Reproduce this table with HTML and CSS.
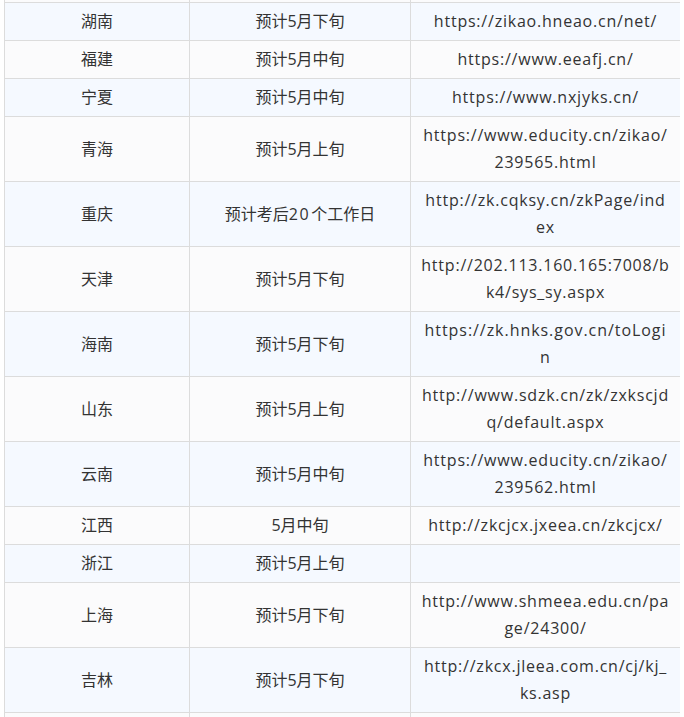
FILE: index.html
```html
<!DOCTYPE html>
<html lang="zh-CN">
<head>
<meta charset="utf-8">
<title>自考成绩查询</title>
<link rel="stylesheet" href="styles.css">
</head>
<body>
<div class="wrap">
<table class="score-table">
<colgroup><col class="c1"><col class="c2"><col class="c3"></colgroup>
<tbody>
<tr class="stub"><td></td><td></td><td></td></tr>
<tr><td>湖南</td><td>预计5月下旬</td><td class="url">https://zikao.hneao.cn/net/</td></tr>
<tr><td>福建</td><td>预计5月中旬</td><td class="url">https://www.eeafj.cn/</td></tr>
<tr><td>宁夏</td><td>预计5月中旬</td><td class="url">https://www.nxjyks.cn/</td></tr>
<tr><td>青海</td><td>预计5月上旬</td><td class="url">https://www.educity.cn/zikao/239565.html</td></tr>
<tr><td>重庆</td><td>预计考后<span class="num">20</span>个工作日</td><td class="url">http://zk.cqksy.cn/zkPage/index</td></tr>
<tr><td>天津</td><td>预计5月下旬</td><td class="url">http://202.113.160.165:7008/bk4/sys_sy.aspx</td></tr>
<tr><td>海南</td><td>预计5月下旬</td><td class="url url-wide">https://zk.hnks.gov.cn/toLogin</td></tr>
<tr><td>山东</td><td>预计5月上旬</td><td class="url">http://www.sdzk.cn/zk/zxkscjdq/default.aspx</td></tr>
<tr><td>云南</td><td>预计5月中旬</td><td class="url">https://www.educity.cn/zikao/239562.html</td></tr>
<tr><td>江西</td><td>5月中旬</td><td class="url">http://zkcjcx.jxeea.cn/zkcjcx/</td></tr>
<tr><td>浙江</td><td>预计5月上旬</td><td class="url"></td></tr>
<tr><td>上海</td><td>预计5月下旬</td><td class="url">http://www.shmeea.edu.cn/page/24300/</td></tr>
<tr><td>吉林</td><td>预计5月下旬</td><td class="url">http://zkcx.jleea.com.cn/cj/kj_ks.asp</td></tr>
<tr><td>&nbsp;</td><td></td><td class="url"></td></tr>
</tbody>
</table>
</div>
</body>
</html>
```
FILE: styles.css
```css
html, body {
  margin: 0;
  padding: 0;
  background: #ffffff;
}
.wrap {
  padding-left: 4px;
  width: 676px;
  overflow: hidden;
  height: 717px;
}
.score-table {
  border-collapse: collapse;
  width: 676px;
  table-layout: fixed;
  font-family: "Open Sans", "Noto Sans CJK SC", sans-serif;
  font-size: 16px;
  color: #333333;
}
.c1 { width: 185px; }
.c2 { width: 221px; }
.c3 { width: 270px; }
.score-table td {
  border: 1px solid #dcdcdc;
  text-align: center;
  vertical-align: middle;
  padding: 5px 10px;
  line-height: 27px;
  height: 27px;
  word-break: break-all;
  overflow-wrap: anywhere;
}
.score-table td.url {
  letter-spacing: 0.78px;
  padding: 5px 10px;
}
.score-table td.url-wide {
  letter-spacing: 0.95px;
}
.num {
  letter-spacing: 1.5px;
  margin-right: 1px;
}
.score-table tr:nth-child(odd) td {
  background: #fbfbfc;
}
.score-table tr:nth-child(even) td {
  background: #f5f9ff;
}
.score-table tr.stub td {
  height: 2px;
  padding: 0;
  line-height: 2px;
  border-top: none;
}
```
